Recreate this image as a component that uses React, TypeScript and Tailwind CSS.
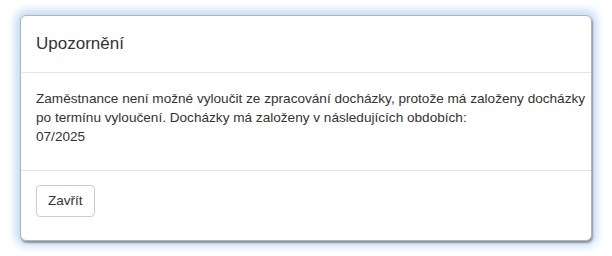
export default function App() {
  return (
    <div className="w-[612px] h-[256px] bg-white pt-[15px] pl-[20px] font-['Liberation_Sans',Arial,sans-serif] text-[#333]">
      <div className="w-[572px] h-[226px] bg-white rounded-[6px] border border-[#b4b4b4] shadow-[1px_2px_2px_rgba(0,0,0,0.35),0_0_9px_5px_rgba(175,210,242,0.75)] flex flex-col">
        {/* header */}
        <div className="h-[57px] border-b border-[#e5e5e5] px-[15px] flex items-center">
          <h4 className="text-[17px] leading-[20px]">Upozornění</h4>
        </div>
        {/* body */}
        <div className="h-[98px] border-b border-[#e5e5e5] pl-[15px] pr-[2px] pt-[16px] text-[13.6px] leading-[19px]">
          <p>
            Zaměstnance není možné vyloučit ze zpracování docházky, protože má založeny docházky po termínu vyloučení. Docházky má založeny v následujících obdobích:
          </p>
          <p>07/2025</p>
        </div>
        {/* footer */}
        <div className="px-[15px] pt-[14px]">
          <button className="h-[32px] px-[11px] rounded-[4px] border border-[#ccc] bg-white text-[13.5px] text-[#333]">
            Zavřít
          </button>
        </div>
      </div>
    </div>
  );
}
